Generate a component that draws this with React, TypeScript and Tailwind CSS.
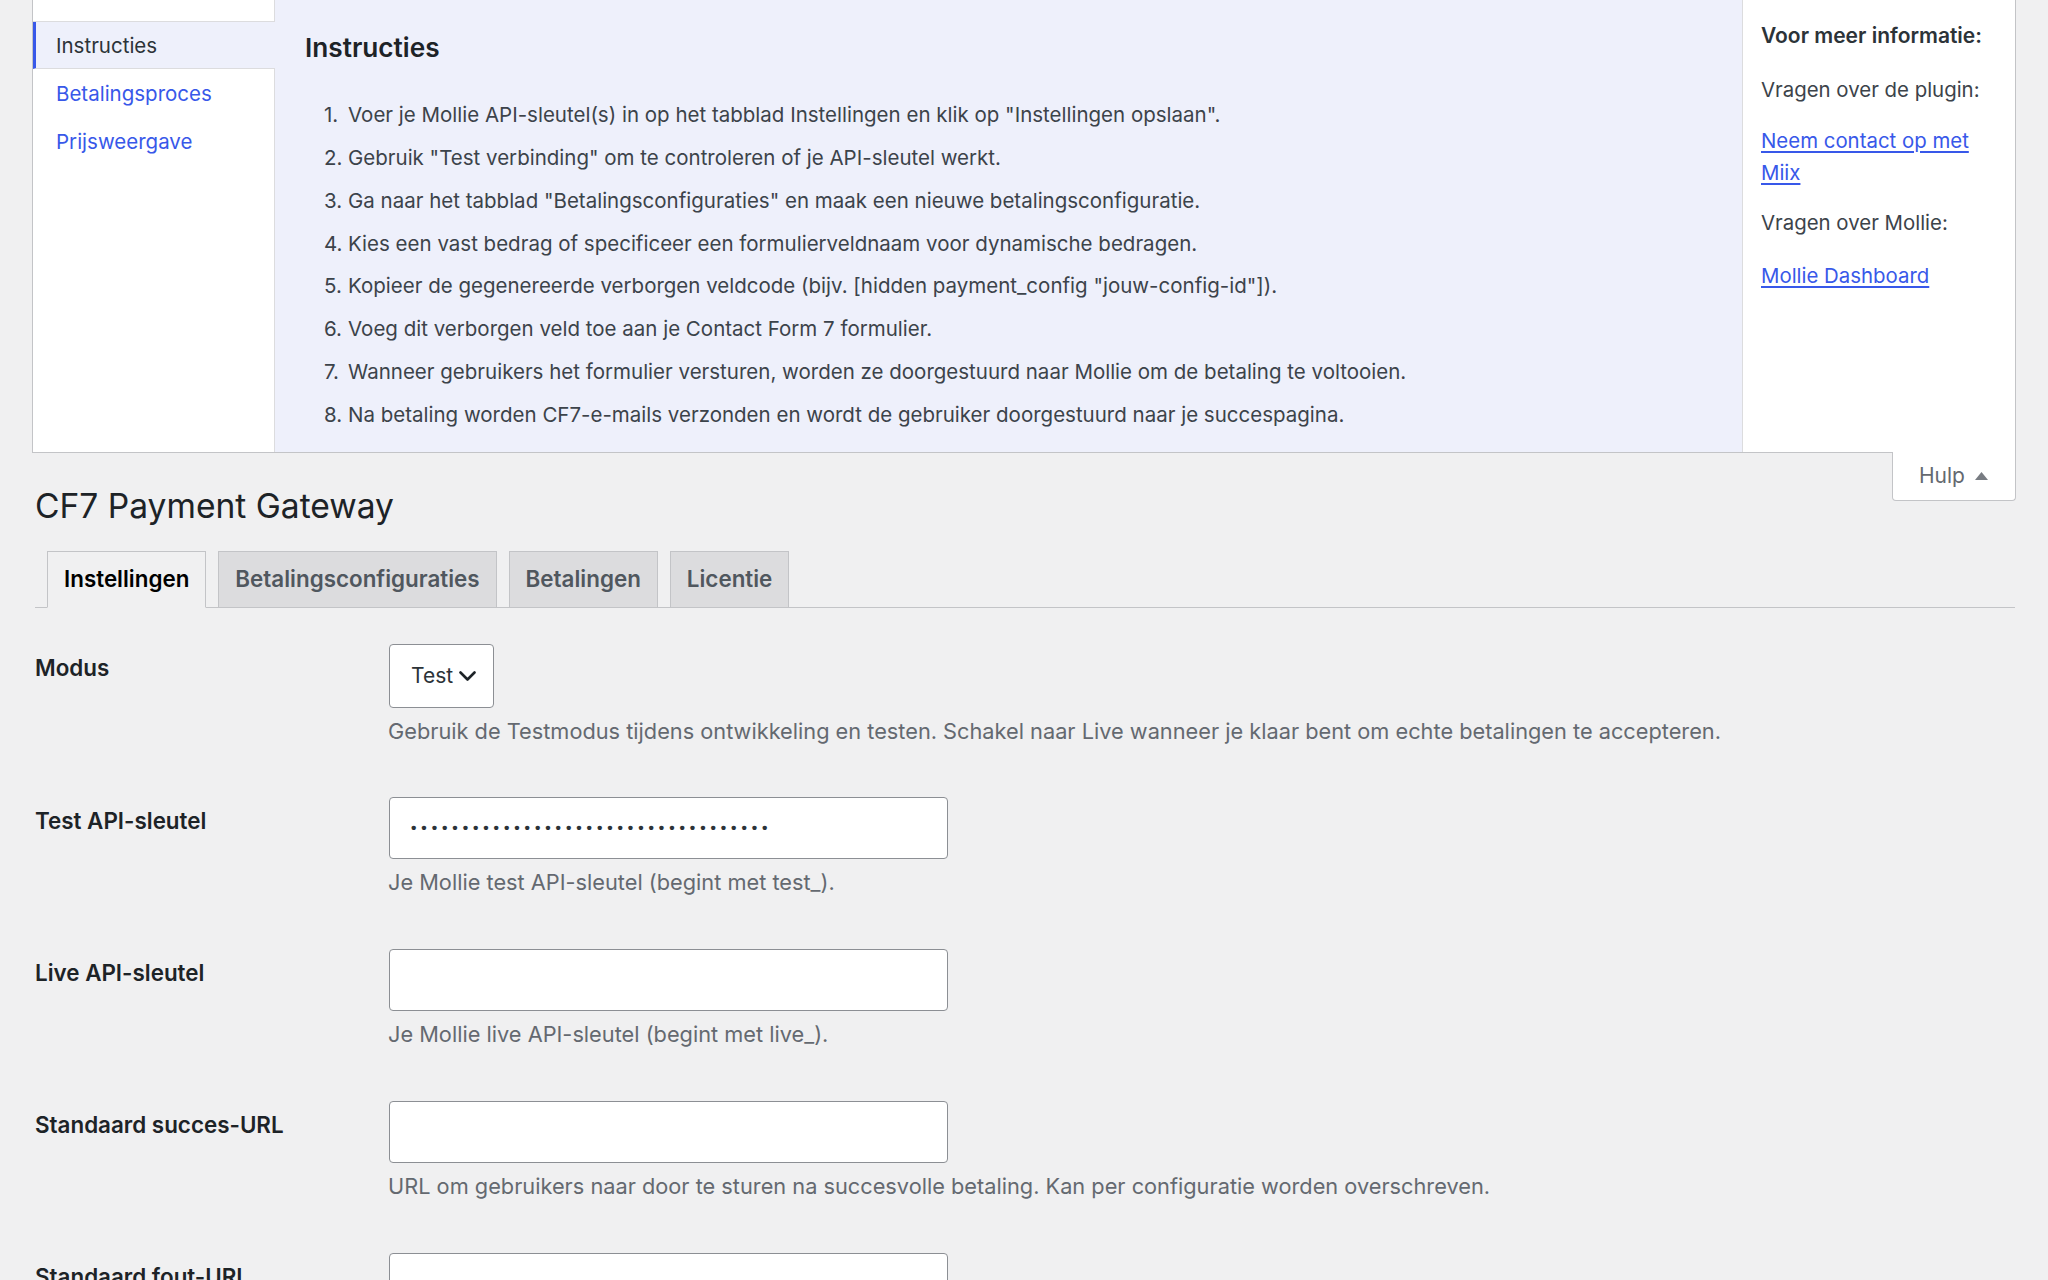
import React from "react";

const steps: string[] = [
  'Voer je Mollie API-sleutel(s) in op het tabblad Instellingen en klik op "Instellingen opslaan".',
  'Gebruik "Test verbinding" om te controleren of je API-sleutel werkt.',
  'Ga naar het tabblad "Betalingsconfiguraties" en maak een nieuwe betalingsconfiguratie.',
  "Kies een vast bedrag of specificeer een formulierveldnaam voor dynamische bedragen.",
  'Kopieer de gegenereerde verborgen veldcode (bijv. [hidden payment_config "jouw-config-id"]).',
  "Voeg dit verborgen veld toe aan je Contact Form 7 formulier.",
  "Wanneer gebruikers het formulier versturen, worden ze doorgestuurd naar Mollie om de betaling te voltooien.",
  "Na betaling worden CF7-e-mails verzonden en wordt de gebruiker doorgestuurd naar je succespagina.",
];

const tabs = ["Instellingen", "Betalingsconfiguraties", "Betalingen", "Licentie"];

function HelpPanel() {
  return (
    <div className="flex h-[453px] border-x border-b border-[#c3c4c7] bg-white">
      {/* help tab list */}
      <div className="flex w-[242px] flex-col text-[20.5px] leading-[32px]">
        <div className="h-[22px] border-b border-r border-[#dcdcde]" />
        <div className="h-[47px] border-b border-l-[3px] border-b-[#dcdcde] border-l-[#3858e9] bg-[#eef0fb] pl-[20px] pt-[8px] text-[#2c3338]">
          Instructies
        </div>
        <div className="flex flex-1 flex-col border-r border-[#dcdcde] pl-[23px] pt-[1px]">
          <a className="h-[48px] pt-[8px] text-[#3858e9]">Betalingsproces</a>
          <a className="h-[48px] pt-[8px] text-[#3858e9]">Prijsweergave</a>
        </div>
      </div>

      {/* active tab content */}
      <div className="flex-1 border-r border-[#dcdcde] bg-[#eef0fb] pl-[30px] pt-[30px]">
        <h2 className="text-[26.2px] font-semibold leading-[36px] text-[#1d2327]">Instructies</h2>
        <ol className="mt-[28px] pl-[19px] text-[20.5px] leading-[42.85px] text-[#3c434a]">
          {steps.map((s, i) => (
            <li key={i} className="flex">
              <span className="w-[24px] shrink-0">{i + 1}.</span>
              <span>{s}</span>
            </li>
          ))}
        </ol>
      </div>

      {/* sidebar */}
      <div className="w-[272px] pl-[18px] pr-[14px] pt-[20px] text-[20.4px] leading-[32px] text-[#3c434a]">
        <p className="text-[21px] font-semibold text-[#2c3338]">Voor meer informatie:</p>
        <p className="mt-[22px]">Vragen over de plugin:</p>
        <p className="mt-[19px]">
          <a className="text-[#3858e9] underline underline-offset-[3px]">
            Neem contact op met Miix
          </a>
        </p>
        <p className="mt-[18px]">Vragen over Mollie:</p>
        <p className="mt-[21px]">
          <a className="text-[#3858e9] underline underline-offset-[3px]">Mollie Dashboard</a>
        </p>
      </div>
    </div>
  );
}

function Field({
  label,
  description,
  children,
  tall,
}: {
  label: string;
  description?: string;
  children: React.ReactNode;
  tall?: boolean;
}) {
  return (
    <div className={tall ? "flex h-[153px]" : "flex h-[152px]"}>
      <div className="w-[354px] shrink-0 pt-[33px] text-[22.4px] font-semibold leading-[28px] text-[#1d2327]">
        {label}
      </div>
      <div className="pt-[23px]">
        {children}
        {description && (
          <p className="mt-[7px] -ml-[1px] text-[21.75px] leading-[33px] text-[#646970]">{description}</p>
        )}
      </div>
    </div>
  );
}

function TextInput({ dots }: { dots?: number }) {
  return (
    <div className="flex h-[62px] w-[559px] items-center rounded-[4px] border border-[#8c8f94] bg-white pl-[21px]">
      {dots ? (
        <span className="font-['Liberation_Sans',sans-serif] text-[15.5px] font-bold tracking-[4.9px] text-[#2c3338]">
          {"•".repeat(dots)}
        </span>
      ) : null}
    </div>
  );
}

export default function App() {
  return (
    <div className="min-h-[1280px] bg-[#f0f0f1] px-[32px] font-['Inter',sans-serif] antialiased">
      <HelpPanel />

      <div className="flex items-start justify-between">
        <h1 className="ml-[3px] mt-[32px] text-[33.6px] font-normal leading-[42px] text-[#1d2327]">
          CF7 Payment Gateway
        </h1>
        <button className="relative -mt-px flex h-[49px] w-[124px] items-center rounded-b-[4px] border-x border-b border-[#c3c4c7] bg-white pl-[26px] text-[21px] text-[#646970]">
          <span>Hulp</span>
          <svg className="ml-[10px]" width="13" height="8" viewBox="0 0 13 8">
            <path d="M6.5 0 L13 8 L0 8 Z" fill="#787c82" />
          </svg>
        </button>
      </div>

      <div className="ml-[3px] mr-[1px] mt-[24px]">
        <nav className="flex h-[57px] gap-[12px] border-b border-[#c3c4c7] pl-[12px]">
          {tabs.map((t, i) => (
            <a
              key={t}
              className={
                i === 0
                  ? "-mb-px h-[57px] border border-[#c3c4c7] border-b-[#f0f0f1] bg-[#f0f0f1] px-[16px] text-[22.4px] font-semibold leading-[54px] text-black"
                  : "-mb-px h-[57px] border border-[#c3c4c7] bg-[#dcdcde] px-[16px] text-[22.4px] font-semibold leading-[54px] text-[#50575e]"
              }
            >
              {t}
            </a>
          ))}
        </nav>

        <div className="mt-[13px]">
          <Field
            tall
            label="Modus"
            description="Gebruik de Testmodus tijdens ontwikkeling en testen. Schakel naar Live wanneer je klaar bent om echte betalingen te accepteren."
          >
            <div className="flex h-[64px] w-[105px] items-center gap-[6px] rounded-[4px] border border-[#8c8f94] bg-white pl-[21px] text-[21px] text-[#2c3338]">
              <span>Test</span>
              <svg width="17" height="10" viewBox="0 0 17 10" fill="none">
                <path d="M1.5 1.5 L8.5 8.5 L15.5 1.5" stroke="#1d2327" strokeWidth="2.6" strokeLinecap="round" strokeLinejoin="round" />
              </svg>
            </div>
          </Field>
          <Field label="Test API-sleutel" description="Je Mollie test API-sleutel (begint met test_).">
            <TextInput dots={35} />
          </Field>
          <Field label="Live API-sleutel" description="Je Mollie live API-sleutel (begint met live_).">
            <TextInput />
          </Field>
          <Field
            label="Standaard succes-URL"
            description="URL om gebruikers naar door te sturen na succesvolle betaling. Kan per configuratie worden overschreven."
          >
            <TextInput />
          </Field>
          <Field label="Standaard fout-URL">
            <TextInput />
          </Field>
        </div>
      </div>
    </div>
  );
}
